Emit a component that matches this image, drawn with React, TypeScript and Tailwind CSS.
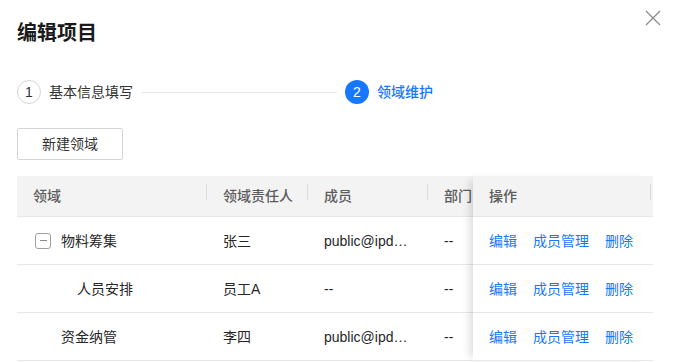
import React from 'react'

type Row = { name: string; indent: number; toggle?: boolean; owner: string; member: string; dept: string }

const ROWS: Row[] = [
  { name: '物料筹集', indent: 0, toggle: true, owner: '张三', member: 'public@ipd…', dept: '--' },
  { name: '人员安排', indent: 1, owner: '员工A', member: '--', dept: '--' },
  { name: '资金纳管', indent: 0, owner: '李四', member: 'public@ipd…', dept: '--' },
]

const FONT = { fontFamily: '"Liberation Sans", "Noto Sans CJK SC", sans-serif' }

function HeadCell({ label, w, sep = true }: { label: string; w: string; sep?: boolean }) {
  return (
    <div className={`relative flex h-10 shrink-0 items-center pl-4 ${w}`}>
      <span className="font-medium text-[#5c5c5c]">{label}</span>
      {sep && <span className="absolute right-0 top-2 h-4 w-px bg-[#dcdcdc]" />}
    </div>
  )
}

export default function App() {
  return (
    <div
      className="relative h-[362px] w-[679px] overflow-hidden bg-white px-[17px] pt-[22px] text-sm text-[#1f1f1f]"
      style={FONT}
    >
      {/* Close */}
      <button className="absolute right-[18px] top-[10px] text-[#8b8b8b]" aria-label="关闭">
        <svg width="16" height="16" viewBox="0 0 16 16" fill="none" stroke="currentColor" strokeWidth="1.3">
          <path d="M1 1L15 15M15 1L1 15" />
        </svg>
      </button>

      <h1 className="text-[20px] font-bold leading-[22px] text-[#1a1a1a]">编辑项目</h1>

      {/* Steps */}
      <div className="mt-[36px] flex h-6 items-center">
        <span className="flex h-6 w-6 items-center justify-center rounded-full border border-[#d5d5d5] text-[14px] text-[#333]">
          1
        </span>
        <span className="ml-2 text-[#333]">基本信息填写</span>
        <span className="ml-2 mr-2 h-px w-[196px] bg-[#e7e7e7]" />
        <span className="flex h-6 w-6 items-center justify-center rounded-full bg-[#1677ff] text-[14px] text-white">
          2
        </span>
        <span className="ml-2 font-medium text-[#1677ff]">领域维护</span>
      </div>

      {/* New button */}
      <button className="mt-[24px] flex h-[32px] w-[106px] items-center justify-center rounded-[2px] border border-[#d5d5d5] text-[#333]">
        新建领域
      </button>

      {/* Table */}
      <div className="mt-[16px] flex w-[636px]">
        <div className="w-[456px] shrink-0 overflow-hidden">
          <div className="w-[560px]">
            <div className="flex bg-[#f3f3f3]">
              <HeadCell label="领域" w="w-[190px]" />
              <HeadCell label="领域责任人" w="w-[101px]" />
              <HeadCell label="成员" w="w-[120px]" />
              <HeadCell label="部门" w="w-[120px]" sep={false} />
            </div>
            {ROWS.map((r) => (
              <div key={r.name} className="flex h-12 items-center border-t border-[#e7e7e7] text-[#262626]">
                <div className="flex w-[190px] shrink-0 items-center pl-[18px]">
                  {r.toggle ? (
                    <span className="mr-[10px] flex h-4 w-4 items-center justify-center rounded-[3px] border border-[#a0a0a0]">
                      <span className="h-px w-[7px] bg-[#8a8a8a]" />
                    </span>
                  ) : (
                    <span className={r.indent ? 'w-[42px]' : 'w-[26px]'} />
                  )}
                  <span>{r.name}</span>
                </div>
                <div className="w-[101px] shrink-0 pl-4">{r.owner}</div>
                <div className="w-[120px] shrink-0 pl-4">{r.member}</div>
                <div className="w-[120px] shrink-0 pl-4">{r.dept}</div>
              </div>
            ))}
            <div className="h-px bg-[#e7e7e7]" />
          </div>
        </div>

        {/* Fixed action column */}
        <div className="relative z-10 w-[180px] shrink-0 bg-white shadow-[-7px_0_8px_-4px_rgba(0,0,0,0.14)]">
          <div className="relative flex h-10 items-center bg-[#f3f3f3] pl-4">
            <span className="font-medium text-[#5c5c5c]">操作</span>
            <span className="absolute right-[2px] top-2 h-4 w-px bg-[#dcdcdc]" />
          </div>
          {ROWS.map((r) => (
            <div key={r.name} className="flex h-12 items-center gap-4 border-t border-[#e7e7e7] pl-4 text-[#1677ff]">
              <span>编辑</span>
              <span>成员管理</span>
              <span>删除</span>
            </div>
          ))}
          <div className="h-px bg-[#e7e7e7]" />
        </div>
      </div>
    </div>
  )
}
